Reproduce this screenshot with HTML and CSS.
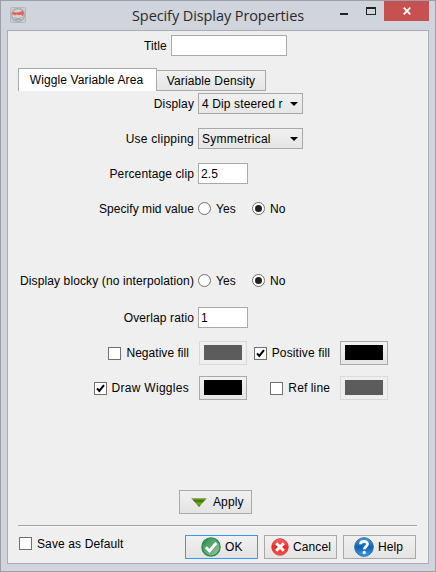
FILE: index.html
```html
<!DOCTYPE html>
<html lang="en">
<head>
<meta charset="utf-8">
<title>Specify Display Properties</title>
<link rel="stylesheet" href="styles.css">
</head>
<body>
<div class="window">
  <header class="titlebar">
    <svg class="app-icon" width="16" height="16" viewBox="0 0 16 16"><rect x=".5" y=".5" width="15" height="15" rx="1" fill="#c9cccd" stroke="#b5b8ba"/><circle cx="8" cy="8" r="6.400" fill="#d2d4d4" stroke="#a4a8a9" stroke-width="1.200"/><path d="M1.500 7 3.500 4.800l3 .7 3-.5L13 3.800l1 3-1.500 3-1-2-3 .5L6.500 7.500 5 8.500 3 7.500Z" fill="#e5605e"/><path d="M4 10.500q4 2.500 8 0M5 12.500h6" fill="none" stroke="#a1a5a6"/></svg>
    <h1 class="caption">Specify Display Properties</h1>
    <div class="controls">
      <span class="minimize"></span>
      <span class="maximize"></span>
      <span class="close"><svg width="8" height="8" viewBox="0 0 8 8"><path d="M.7.7l6.600 6.600M7.300.7.7 7.300" stroke="#fff" stroke-width="1.800"/></svg></span>
    </div>
  </header>
  <main class="client">
    <div class="title-row"><span>Title</span><span class="field title-field"></span></div>
    <nav class="tabs"><span class="tab active">Wiggle Variable Area</span><span class="tab">Variable Density</span></nav>
    <section class="form">
      <div class="label">Display</div>
      <div class="select"><span>4 Dip steered r</span><i class="arrow"></i></div>
      <div class="label wide">Use clipping</div>
      <div class="select"><span class="wide">Symmetrical</span><i class="arrow"></i></div>
      <div class="label">Percentage clip</div>
      <div class="field">2.5</div>
      <div class="label mid">Specify mid value</div>
      <div class="radios"><i class="radio"></i><span class="yes">Yes</span><i class="radio on"></i><span>No</span></div>
      <div class="label">Display blocky (no interpolation)</div>
      <div class="radios"><i class="radio"></i><span class="yes">Yes</span><i class="radio on"></i><span>No</span></div>
      <div class="label">Overlap ratio</div>
      <div class="field">1</div>
    </section>
    <section class="fills">
      <div class="check-label"><i class="box"></i><span class="negative">Negative fill</span></div>
      <div class="swatch disabled"><i></i></div>
      <div class="check-label"><i class="box"><svg width="9" height="9" viewBox="0 0 9 9"><path d="M1 4.300 3.300 7 8 1.200" fill="none" stroke="#000" stroke-width="2"/></svg></i><span>Positive fill</span></div>
      <div class="swatch"><i></i></div>
      <div class="check-label"><i class="box"><svg width="9" height="9" viewBox="0 0 9 9"><path d="M1 4.300 3.300 7 8 1.200" fill="none" stroke="#000" stroke-width="2"/></svg></i><span class="wiggles">Draw Wiggles</span></div>
      <div class="swatch"><i></i></div>
      <div class="check-label"><i class="box"></i><span>Ref line</span></div>
      <div class="swatch disabled"><i></i></div>
    </section>
    <div class="button apply"><svg width="16" height="9" viewBox="0 0 16 9"><defs><linearGradient id="leaf" x2="0" y2="1"><stop stop-color="#a5ba68"/><stop offset=".3" stop-color="#397209"/><stop offset=".65" stop-color="#78ad20"/><stop offset="1" stop-color="#285f00"/></linearGradient></defs><path d="M0 0h16L8 9Z" fill="url(#leaf)"/></svg><span>Apply</span></div>
    <footer class="footer">
      <div class="save"><i class="box"></i><span>Save as Default</span></div>
      <div class="button ok"><svg width="20" height="20" viewBox="0 0 20 20"><defs><linearGradient id="green" x2="1" y2="1"><stop stop-color="#238d48"/><stop offset="1" stop-color="#9bc6a3"/></linearGradient></defs><circle cx="10" cy="10" r="9.100" fill="url(#green)" stroke="#268a48" stroke-width="1.300"/><path d="M4.800 10.300 8.500 14 15.300 6" fill="none" stroke="#fff" stroke-width="2.800"/></svg><span>OK</span></div>
      <div class="button cancel"><svg width="18" height="18" viewBox="0 0 18 18"><defs><linearGradient id="red" x2="0" y2="1"><stop stop-color="#ef6b60"/><stop offset=".5" stop-color="#eb2929"/><stop offset="1" stop-color="#ff5141"/></linearGradient></defs><circle cx="9" cy="9" r="8.200" fill="url(#red)" stroke="#d63e38"/><path d="M5.200 5.200l7.600 7.600M12.800 5.200l-7.600 7.600" stroke="#fff" stroke-width="3"/></svg><span>Cancel</span></div>
      <div class="button help"><svg width="20" height="20" viewBox="0 0 20 20"><defs><linearGradient id="blue" x2="0" y2="1"><stop stop-color="#579bd0"/><stop offset=".5" stop-color="#1260b3"/><stop offset="1" stop-color="#36a1e9"/></linearGradient></defs><circle cx="10" cy="10" r="9.300" fill="url(#blue)" stroke="#2469b0"/><path d="M6.500 7.200C6.600 3.600 13.500 3.500 13.500 7.100c0 2.500-3.200 2.500-3.200 5.200" fill="none" stroke="#fff" stroke-width="2.700"/><circle cx="10.200" cy="15.500" r="1.700" fill="#fff"/></svg><span>Help</span></div>
    </footer>
  </main>
</div>
</body>
</html>
```
FILE: styles.css
```css
* { box-sizing: border-box; }
body { margin: 0; background: #d0d4dc; font: 12px/14px "Liberation Sans", Arial, sans-serif; letter-spacing: .12px; color: #000; }
.window { width: 436px; height: 572px; border: 1px solid #9c9fa8; padding: 0 6px 7px; background: #d0d4dc; display: flex; flex-direction: column; }
.titlebar { height: 29px; flex: none; display: flex; align-items: flex-start; padding-left: 3px; }
.app-icon { margin-top: 6px; }
.caption { width: 173px; margin: 5px 0 0 106px; font: 400 14.500px/20px "Open Sans", sans-serif; letter-spacing: -.09px; color: #292a2e; white-space: nowrap; }
.controls { display: flex; margin-left: 35px; }
.minimize { width: 8px; height: 2px; background: #222; margin-top: 12px; }
.maximize { width: 10px; height: 8px; border: 1px solid #222; border-top-width: 2px; margin: 6px 0 0 18px; }
.close { width: 45px; height: 20px; background: #c75050; margin-left: 8px; display: flex; align-items: center; justify-content: center; }
.client { flex: 1; border: 1px solid #a9acb4; background: #efefef; display: flex; flex-direction: column; }
.title-row { display: flex; height: 21px; margin: 4px 0 0 136px; line-height: 22px; gap: 4px; }
.title-row > span:first-child { width: 23px; white-space: nowrap; }
.field { height: 21px; width: 50px; background: #fff; border: 1px solid #a9a9ac; padding-left: 2px; line-height: 20px; }
.title-field { width: 116px; }
.tabs { display: flex; height: 23px; margin: 12px 0 0 10px; align-items: flex-end; }
.tab { width: 109px; height: 21px; border: 1px solid #a9a9a9; border-left: 0; background: linear-gradient(#f1f1f1, #e5e5e5); text-align: center; line-height: 20px; }
.tab.active { width: 139px; height: 23px; border-left: 1px solid #a9a9a9; border-bottom: 0; background: #fff; line-height: 22px; padding-right: 2px; }
.form { display: grid; grid-template-columns: 186px 105px; grid-template-rows: 35px 35px 35px 72px 37px 21px; column-gap: 4px; margin-top: 2px; align-items: start; }
.label { text-align: right; line-height: 22px; white-space: nowrap; }
.wide { letter-spacing: .25px; }
.mid { letter-spacing: .06px; }
.select { height: 21px; border: 1px solid #a9a9a9; background: linear-gradient(#f0f0f0, #e6e6e6); padding: 0 4px 0 3px; line-height: 20px; display: flex; justify-content: space-between; align-items: center; white-space: nowrap; }
.arrow { border: 4px solid transparent; border-top-color: #000; border-bottom: 0; }
.radios { display: flex; align-items: center; height: 21px; }
.radio { width: 13px; height: 13px; border: 1px solid #707070; border-radius: 50%; background: #fff; margin-right: 5px; display: flex; align-items: center; justify-content: center; }
.radio.on::before { content: ""; width: 7px; height: 7px; border-radius: 50%; background: #202020; }
.yes { width: 36px; }
.fills { margin-top: 13px; display: grid; grid-template-columns: 181px 48px 73px 48px; grid-template-rows: 24px 24px; row-gap: 11px; column-gap: 10px; }
.check-label { display: flex; align-items: center; justify-content: flex-end; white-space: nowrap; }
.negative { letter-spacing: .04px; }
.wiggles { letter-spacing: .28px; }
.box { width: 13px; height: 13px; flex: none; border: 1px solid #707070; background: #fff; margin-right: 5px; display: flex; align-items: center; justify-content: center; }
.swatch { width: 48px; height: 24px; border: 1px solid #a9a9a9; background: linear-gradient(#f1f1f1, #e5e5e5); padding: 3px 4px; }
.swatch i { display: block; width: 38px; height: 15px; background: #000; }
.swatch.disabled { border-color: #d9d9d9; background: #efefef; }
.swatch.disabled i { background: #5c5c5c; }
.button { width: 73px; height: 24px; border: 1px solid #a9a9a9; background: linear-gradient(#f1f1f1, #e3e3e3); display: flex; align-items: center; white-space: nowrap; }
.apply { margin: 90px 0 0 171px; padding-left: 11px; gap: 6px; }
.footer { margin: 11px 11px 0 10px; border-top: 1px solid #a1a1a1; box-shadow: inset 0 1px #f8f8f8; padding: 9px 0 0 1px; display: flex; gap: 6px; }
.save { width: 160px; display: flex; padding-top: 2px; }
.ok { border-color: #3399ff; padding-left: 15px; gap: 4px; }
.cancel { padding-left: 6px; gap: 4px; }
.help { padding-left: 10px; gap: 4px; }
```
